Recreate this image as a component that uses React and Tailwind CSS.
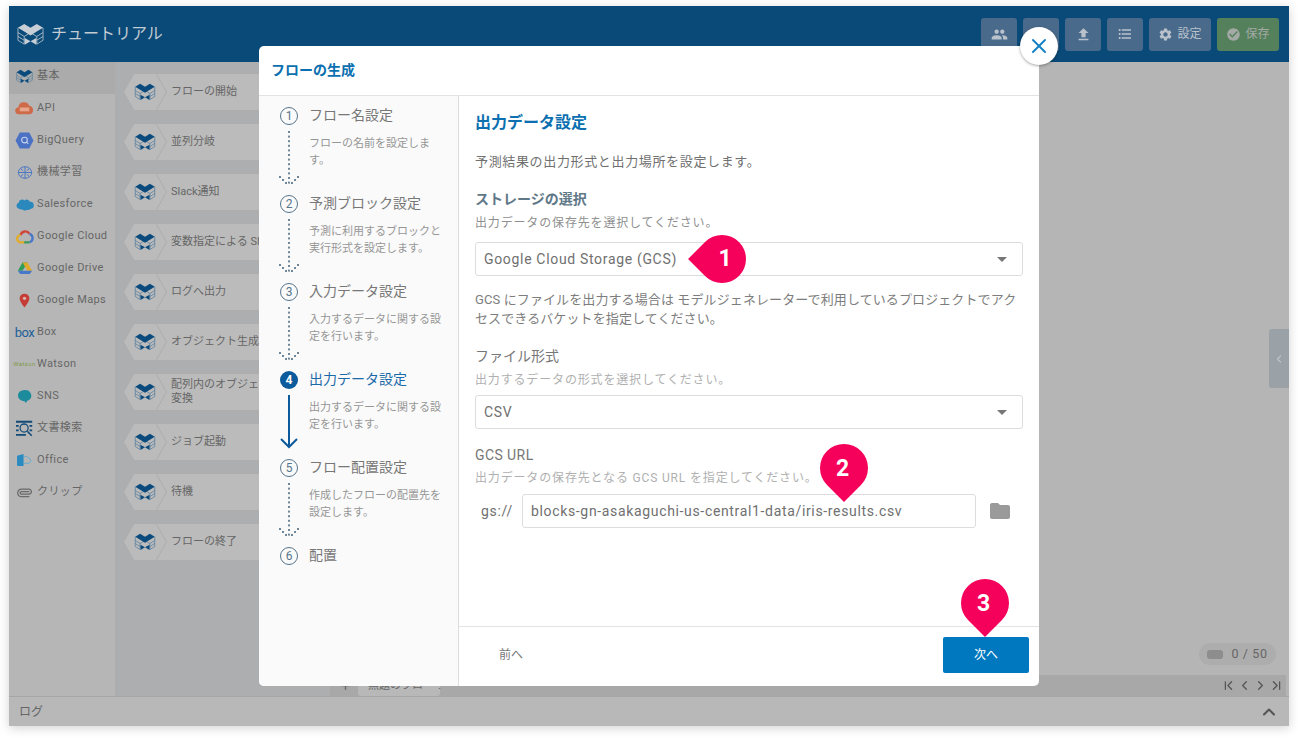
import React from "react";
import { ChevronFirst, ChevronLast, ChevronLeft, ChevronRight, ChevronUp, Paperclip, Plus, X } from "lucide-react";
import { MdCheckCircle, MdFileUpload, MdFolder, MdFormatListBulleted, MdPeople, MdSettings } from "react-icons/md";

const sans = "font-['Roboto','Noto_Sans_CJK_JP',sans-serif]";

const CubeLogo = ({ className, fill = "#0a4a7c", line = "#3f7199" }) => (
  <svg viewBox="0 0 28 24" className={className}>
    <path d="M1 5v13l6.5 4V14L1 10M27 5v13l-6.5 4V14l6.5-4M7.5 14L14 10l6.5 4M1 14l6.5 4M27 14l-6.5 4" fill="none" stroke={line} strokeWidth="0.8" />
    <path d="M1 5l6.5-4L14 5 7.5 9zM14 5l6.5-4L27 5l-6.5 4zM7.5 9L14 5l6.5 4L14 13z" fill={fill} />
    <path d="M8 15.5l6 3.5-6 3.5zM20 15.5L14 19l6 3.5z" fill={fill} />
  </svg>
);

const ApiIcon = () => (
  <svg viewBox="0 0 20 14" className="w-[19px] h-[14px]">
    <path d="M4 13.5a3.5 3.5 0 0 1-.5-7A6 6 0 0 1 15 4.5a4.6 4.6 0 0 1 .6 9z" fill="#cf6a48" />
    <rect x="5" y="6.5" width="10" height="4" fill="#e6a58d" />
  </svg>
);
const BigQueryIcon = () => (
  <svg viewBox="0 0 20 18" className="w-[19px] h-[17px]">
    <path d="M5 0.5h10L19.5 9 15 17.5H5L0.5 9z" fill="#4b71c4" />
    <circle cx="10" cy="8.5" r="3" fill="none" stroke="#c5d2ec" strokeWidth="1.2" />
    <path d="M12 10.5l2 2" stroke="#c5d2ec" strokeWidth="1.2" />
  </svg>
);
const BrainIcon = () => (
  <svg viewBox="0 0 18 16" className="w-[16px] h-[15px]" fill="none" stroke="#4a76c2" strokeWidth="1.1">
    <ellipse cx="9" cy="8" rx="7.5" ry="6.5" />
    <path d="M9 1.5v13M1.5 8h15M4 3.5l3 2.5M14 3.5L11 6M4 12.5L7 10M14 12.5L11 10" />
  </svg>
);
const SalesforceIcon = () => (
  <svg viewBox="0 0 20 14" className="w-[18px] h-[13px]">
    <path d="M4 12a3.6 3.6 0 0 1-1-7 4 4 0 0 1 6.500-2.500 3.800 3.800 0 0 1 6 1.500 4 4 0 0 1 .5 8 3.500 3.500 0 0 1-4 .8 3.800 3.800 0 0 1-5-.3A3.400 3.400 0 0 1 4 12z" fill="#2a88bc" />
  </svg>
);
const GoogleCloudIcon = () => (
  <svg viewBox="0 0 20 16" className="w-[18px] h-[15px]" fill="none" strokeWidth="2.600">
    <path d="M5 6.500A5.500 5.500 0 0 1 15 5" stroke="#d0463a" />
    <path d="M15 5a5 5 0 0 1 0 9.500" stroke="#4a78c8" />
    <path d="M15 14.500H9" stroke="#3f9c58" />
    <path d="M9 14.500H5.500A4 4 0 0 1 5 6.500" stroke="#e0ac2a" />
  </svg>
);
const DriveIcon = () => (
  <svg viewBox="0 0 20 16" className="w-[16px] h-[14px]">
    <path d="M7 1h6l-6 10.500H1z" fill="#2f9c58" />
    <path d="M7 1h6l6 10.500h-6z" fill="#dfa92a" />
    <path d="M1 11.500h18L16 15.500H4z" fill="#4a78c8" />
  </svg>
);
const PinIcon = () => (
  <svg viewBox="0 0 12 16" className="w-[11px] h-[15px]">
    <path d="M6 0.500a5.300 5.300 0 0 1 5.300 5.300C11.300 9.500 6 15.500 6 15.500S.7 9.500.7 5.800A5.300 5.300 0 0 1 6 .5z" fill="#c53c36" />
    <circle cx="6" cy="5.600" r="1.800" fill="#d8b5b2" />
  </svg>
);
const BubbleIcon = () => (
  <svg viewBox="0 0 16 16" className="w-[15px] h-[15px]">
    <path d="M8 1a7 6 0 0 1 3 11.500L9.500 15 8 13A7 6 0 0 1 8 1z" fill="#1c8c9c" />
  </svg>
);
const SearchDocIcon = () => (
  <svg viewBox="0 0 20 18" className="w-[18px] h-[17px]">
    <path d="M0 1.500h18M0 16h11M0 6h3M15 6h3M0 11h3M15 11h3" stroke="#124a78" strokeWidth="2" />
    <circle cx="9" cy="8.500" r="4.500" fill="none" stroke="#124a78" strokeWidth="1.400" />
    <path d="M12.500 12l5 5" stroke="#124a78" strokeWidth="1.800" />
  </svg>
);
const OfficeIcon = () => (
  <svg viewBox="0 0 18 15" className="w-[17px] h-[14px]">
    <path d="M8 1v13H2l-1-1V3z" fill="#2a8bc0" />
    <path d="M8 4.500a3 3 0 0 1 5 .8 3 3 0 0 1 1 5.700H8" fill="none" stroke="#62aacc" strokeWidth="1" />
  </svg>
);

const sideItems = [
  { label: "基本", icon: <CubeLogo className="w-[17px] h-[15px]" /> },
  { label: "API", icon: <ApiIcon /> },
  { label: "BigQuery", icon: <BigQueryIcon /> },
  { label: "機械学習", icon: <BrainIcon /> },
  { label: "Salesforce", icon: <SalesforceIcon /> },
  { label: "Google Cloud", icon: <GoogleCloudIcon /> },
  { label: "Google Drive", icon: <DriveIcon /> },
  { label: "Google Maps", icon: <PinIcon /> },
  { label: "Box", icon: <span className="text-[13px] leading-none tracking-[-0.04em] text-[#1c5f98]">box</span> },
  { label: "Watson", icon: <span className="text-[6px] leading-none text-[#7f9a48]">Watson</span> },
  { label: "SNS", icon: <BubbleIcon /> },
  { label: "文書検索", icon: <SearchDocIcon /> },
  { label: "Office", icon: <OfficeIcon /> },
  { label: "クリップ", icon: <Paperclip size={15} strokeWidth={2} className="text-[#6a6a6a] rotate-45" /> },
];

const blocks = [
  ["フローの開始"],
  ["並列分岐"],
  ["Slack通知"],
  ["変数指定による Slack通知"],
  ["ログへ出力"],
  ["オブジェクト生成"],
  ["配列内のオブジェクト", "変換"],
  ["ジョブ起動"],
  ["待機"],
  ["フローの終了"],
];

const steps = [
  { n: 1, title: "フロー名設定", desc: ["フローの名前を設定しま", "す。"] },
  { n: 2, title: "予測ブロック設定", desc: ["予測に利用するブロックと", "実行形式を設定します。"] },
  { n: 3, title: "入力データ設定", desc: ["入力するデータに関する設", "定を行います。"] },
  { n: 4, title: "出力データ設定", desc: ["出力するデータに関する設", "定を行います。"], active: true },
  { n: 5, title: "フロー配置設定", desc: ["作成したフローの配置先を", "設定します。"] },
  { n: 6, title: "配置", desc: [] },
];

const DottedArrow = () => (
  <svg width="20" height="55" viewBox="0 0 20 55" className="mt-[6px]">
    {Array.from({ length: 12 }).map((_, i) => (
      <rect key={i} x="9" y={i * 4.6} width="2" height="2" fill="#6f8798" />
    ))}
    {[[1, 45], [4, 48], [7, 51], [19, 45], [16, 48], [13, 51]].map(([x, y]) => (
      <rect key={`${x}-${y}`} x={x - 1} y={y} width="2" height="2" fill="#6f8798" />
    ))}
  </svg>
);

const SolidArrow = () => (
  <svg width="20" height="55" viewBox="0 0 20 55" className="mt-[6px]">
    <path d="M10 0v52M2 44l8 8 8-8" fill="none" stroke="#0b5a9c" strokeWidth="2" />
  </svg>
);

const Hex = () => (
  <svg viewBox="0 0 44 38" className="w-[44px] h-[38px] shrink-0 relative z-10">
    <path d="M11 .5h22L43.500 19 33 37.500H11L.5 19z" fill="#bbbbbb" stroke="#adadad" />
  </svg>
);

const Badge = ({ n, rotate, className, textClass }) => (
  <div className={`absolute w-12 h-12 z-30 ${className}`}>
    <div className={`absolute inset-0 bg-[#f5005a] rounded-full rounded-br-none ${rotate}`} />
    <span className={`absolute inset-0 flex items-center justify-center text-white text-[23px] font-bold font-['Roboto',sans-serif] ${textClass}`}>{n}</span>
  </div>
);

const SelectBox = ({ value }) => (
  <div className="h-[34px] border border-[#dddddd] rounded-[3px] flex items-center justify-between pl-2 pr-[15px] text-[14px] tracking-[0.048em] text-[#707070]">
    <span>{value}</span>
    <span className="w-0 h-0 border-x-[5px] border-x-transparent border-t-[5px] border-t-[#777777]" />
  </div>
);

const HeadButton = ({ children, className = "w-9" }) => (
  <button className={`${className} h-[33px] rounded-[3px] bg-[#4a6a8c] flex items-center justify-center gap-1 text-[#b9c2cb] text-[12px]`}>
    {children}
  </button>
);

const App = () => {
  return (
    <div className={`${sans} w-[1298px] h-[738px] bg-white pt-[6px] pl-[9px] overflow-hidden`}>
      <div className="relative w-[1280px] h-[720px] flex flex-col shadow-[0_2px_10px_rgba(0,0,0,0.18)] bg-[#b6b6b6]">
        {/* ヘッダー */}
        <div className="h-[56px] shrink-0 bg-[#0a4a78] flex items-center justify-between pl-[8px] pr-[10px]">
          <div className="flex items-center gap-[7px]">
            <CubeLogo className="w-[27px] h-[25px]" fill="#c7ced6" line="#c7ced6" />
            <span className="text-[16px] text-[#c3cbd3]">チュートリアル</span>
          </div>
          <div className="flex gap-[6px]">
            <HeadButton><MdPeople size={17} /></HeadButton>
            <HeadButton><MdPeople size={17} className="opacity-0" /></HeadButton>
            <HeadButton><MdFileUpload size={17} /></HeadButton>
            <HeadButton><MdFormatListBulleted size={16} /></HeadButton>
            <HeadButton className="w-[62px]"><MdSettings size={15} />設定</HeadButton>
            <button className="w-[62px] h-[33px] rounded-[3px] bg-[#55805c] flex items-center justify-center gap-1 text-[#a3a9a5] text-[12px]">
              <MdCheckCircle size={15} />保存
            </button>
          </div>
        </div>

        <div className="flex-1 flex min-h-0">
          {/* カテゴリ */}
          <div className="w-[106px] shrink-0 bg-[#b6b6b6]">
            {sideItems.map((item, i) => (
              <div key={item.label} className={`h-[32px] flex items-center gap-[3px] pl-[6px] pb-[4px] text-[11px] tracking-[0.035em] text-[#666666] ${i === 0 ? "bg-[#ababab]" : ""}`}>
                <span className="w-[19px] flex justify-center shrink-0">{item.icon}</span>
                <span>{item.label}</span>
              </div>
            ))}
          </div>

          {/* ブロック一覧 */}
          <div className="w-[215px] shrink-0 bg-[#adaeb0] pt-[11px] pl-[8px] flex flex-col gap-[12px] overflow-hidden">
            {blocks.map((lines) => (
              <div key={lines[0]} className="h-[38px] flex items-center relative">
                <Hex />
                <CubeLogo className="absolute z-20 left-[11px] top-[10px] w-[22px] h-[18px]" />
                <div className="-ml-[12px] pl-[15px] w-[176px] h-[38px] bg-[#bbbbbb] border border-[#adadad] flex flex-col justify-center text-[11px] leading-[14px] text-[#666666] whitespace-nowrap overflow-hidden">
                  {lines.map((l) => <span key={l}>{l}</span>)}
                </div>
              </div>
            ))}
          </div>

          {/* キャンバス */}
          <div className="flex-1 flex flex-col bg-[#b5b5b5] border-l border-[#a8a8a8]">
            <div className="flex-1 flex items-center justify-end pt-3">
              <div className="w-[20px] h-[59px] bg-[#9aa2a8] rounded-l-[3px] flex items-center justify-center">
                <ChevronLeft size={12} strokeWidth={2.5} className="text-[#bcc2c7]" />
              </div>
            </div>
            <div className="flex justify-end pr-[13px] mb-[10px]">
              <div className="w-[77px] h-[22px] rounded-full bg-[#adadad] flex items-center justify-center gap-[8px] text-[12.5px] tracking-[0.05em] text-[#666666]">
                <span className="w-[16px] h-[9px] bg-[#8d8d8d] rounded-[3px]" />
                0 / 50
              </div>
            </div>
            <div className="h-[21px] mr-[3px] bg-[#a8a8a8] flex items-center justify-between pr-[2px]">
              <div className="flex items-center gap-[6px] pl-[8px]">
                <Plus size={13} strokeWidth={2.5} className="text-[#666666]" />
                <div className="w-[82px] h-[21px] bg-[#b8b8b8] rounded-b-[3px] text-[11px] text-[#666666] flex items-center justify-between px-[10px] pt-[1px]">
                  <span className="whitespace-nowrap">無題のフロー</span>
                  <span>⋮</span>
                </div>
              </div>
              <div className="flex items-center gap-[1px] text-[#555555]">
                <ChevronFirst size={15} />
                <ChevronLeft size={15} />
                <ChevronRight size={15} />
                <ChevronLast size={15} />
              </div>
            </div>
          </div>
        </div>

        {/* ログ */}
        <div className="h-[30px] shrink-0 bg-[#b8b8b8] border-t border-[#a6a6a6] flex items-center justify-between pl-[10px] pr-[10px] text-[12px] text-[#666666]">
          <span>ログ</span>
          <ChevronUp size={20} strokeWidth={2.5} className="text-[#555555]" />
        </div>

        {/* モーダル */}
        <div className="absolute left-[250px] top-[40px] w-[780px] h-[640px] bg-white rounded-[5px] flex flex-col z-20">
          <div className="h-[50px] shrink-0 border-b border-[#e3e3e3] flex items-center pl-3 text-[14px] font-bold text-[#0b6fb0]">
            フローの生成
          </div>
          <div className="flex-1 flex min-h-0">
            <div className="w-[200px] shrink-0 bg-[#fafafa] border-r border-[#dddddd] rounded-bl-[5px] pt-[11px] pl-[20px]">
              {steps.map((s) => (
                <div key={s.n} className="h-[88px] flex">
                  <div className="w-[20px] flex flex-col items-center shrink-0">
                    {s.active ? (
                      <span className="w-[18px] h-[18px] rounded-full bg-[#0b5a9c] text-white text-[12px] font-bold flex items-center justify-center">{s.n}</span>
                    ) : (
                      <span className="w-[18px] h-[18px] rounded-full border border-[#56758c] text-[#56758c] text-[12px] flex items-center justify-center">{s.n}</span>
                    )}
                    {s.n < 6 && (s.active ? <SolidArrow /> : <DottedArrow />)}
                  </div>
                  <div className="pl-[10px]">
                    <div className={`h-[18px] pb-[2px] flex items-center text-[14px] whitespace-nowrap ${s.active ? "text-[#1a6aa8]" : "text-[#777777]"}`}>{s.title}</div>
                    <div className="mt-[10px] text-[11px] leading-[17px] text-[#969696] whitespace-nowrap">
                      {s.desc.map((d) => <div key={d}>{d}</div>)}
                    </div>
                  </div>
                </div>
              ))}
            </div>

            <div className="flex-1 flex flex-col min-w-0">
              <div className="flex-1 pt-[16px] pl-[16px] pr-[16px] relative">
                <div className="text-[16px] leading-[22px] font-bold text-[#0b6fb0]">出力データ設定</div>
                <p className="mt-[18px] text-[13px] tracking-[0.05em] leading-[20px] text-[#707070]">予測結果の出力形式と出力場所を設定します。</p>
                <div className="mt-[17px] text-[14px] leading-[20px] font-bold text-[#5f7888]">ストレージの選択</div>
                <div className="mt-[4px] text-[12px] tracking-[0.07em] leading-[20px] text-[#8f8f8f]">出力データの保存先を選択してください。</div>
                <div className="mt-[9px]"><SelectBox value="Google Cloud Storage (GCS)" /></div>
                <p className="mt-[14px] text-[13px] tracking-[0.008em] leading-[19px] text-[#7d7d7d]">
                  GCS にファイルを出力する場合は モデルジェネレーターで利用しているプロジェクトでアク<br />セスできるバケットを指定してください。
                </p>
                <div className="mt-[18px] text-[14px] leading-[20px] text-[#777777]">ファイル形式</div>
                <div className="mt-[4px] text-[12px] tracking-[0.07em] leading-[20px] text-[#b0b0b0]">出力するデータの形式を選択してください。</div>
                <div className="mt-[5px]"><SelectBox value="CSV" /></div>
                <div className="mt-[16px] text-[14px] tracking-[0.03em] leading-[20px] text-[#777777]">GCS URL</div>
                <div className="mt-[3px] text-[12px] tracking-[0.07em] leading-[20px] text-[#b0b0b0] whitespace-nowrap">出力データの保存先となる GCS URL を指定してください。</div>
                <div className="mt-[6px] flex items-center pl-[6px]">
                  <span className="w-[41px] shrink-0 text-[14px] tracking-[0.05em] text-[#707070]">gs://</span>
                  <div className="w-[454px] h-[34px] border border-[#dddddd] rounded-[3px] flex items-center pl-2 text-[14px] tracking-[0.047em] text-[#707070] whitespace-nowrap">
                    blocks-gn-asakaguchi-us-central1-data/iris-results.csv
                  </div>
                  <MdFolder size={24} className="ml-[12px] text-[#9a9a9a]" />
                </div>
              </div>
              <div className="h-[60px] shrink-0 border-t border-[#e3e3e3] flex items-center justify-between pl-[40px] pr-[10px] pb-[3px]">
                <span className="text-[12px] text-[#777777]">前へ</span>
                <button className="w-[86px] h-[36px] bg-[#0078bf] rounded-[2px] text-white text-[12px]">次へ</button>
              </div>
            </div>
          </div>

          <Badge n="1" rotate="rotate-135" className="left-[439px] top-[189px]" textClass="pl-[6px]" />
          <Badge n="2" rotate="rotate-45" className="left-[561px] top-[398px]" textClass="pr-[3px] pt-[3px]" />
          <Badge n="3" rotate="rotate-45" className="left-[702px] top-[533px]" textClass="pr-[3px] pt-[3px]" />

          <button className="absolute -top-[19px] -right-[19px] w-[38px] h-[38px] rounded-full bg-white shadow-[0_1px_3px_rgba(0,0,0,0.35)] flex items-center justify-center text-[#1581c4]">
            <X size={24} strokeWidth={2} />
          </button>
        </div>
      </div>
    </div>
  );
};

export default App;
